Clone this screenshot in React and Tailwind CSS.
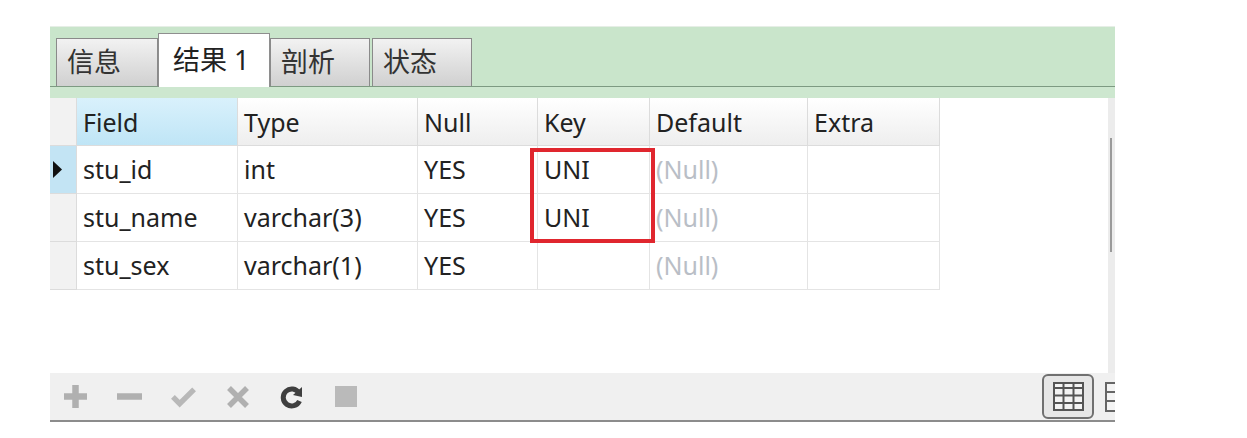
import React from "react";

const cols = [
  { name: "Field", w: "w-[161px]" },
  { name: "Type", w: "w-[180px]" },
  { name: "Null", w: "w-[120px]" },
  { name: "Key", w: "w-[112px]" },
  { name: "Default", w: "w-[158px]" },
  { name: "Extra", w: "w-[132px]" },
];

const rows = [
  ["stu_id", "int", "YES", "UNI", null, ""],
  ["stu_name", "varchar(3)", "YES", "UNI", null, ""],
  ["stu_sex", "varchar(1)", "YES", "", null, ""],
];

const font = { fontFamily: '"Noto Sans", "Noto Sans CJK SC", sans-serif' };

function Tab({ label, active, className }) {
  if (active) {
    return (
      <div
        className={`h-[54px] mb-[-1px] bg-white border border-b-0 border-[#8e8e8e] flex items-center pl-[14px] text-[27px] text-[#222] relative z-10 ${className}`}
      >
        {label}
      </div>
    );
  }
  return (
    <div
      className={`h-[48px] bg-gradient-to-b from-[#f2f2f2] to-[#d0d0d0] border border-b-0 border-[#8a8a8a] flex items-center pl-[10px] text-[27px] text-[#333] ${className}`}
    >
      {label}
    </div>
  );
}

function ToolIcon({ children, className = "" }) {
  return <div className={`flex items-center justify-center ${className}`}>{children}</div>;
}

export default function App() {
  return (
    <div className="w-[1247px] h-[438px] bg-white" style={font}>
      <div className="pt-[26px] pl-[50px]">
        <div className="w-[1065px] flex flex-col">
          {/* tab strip */}
          <div className="h-[61px] bg-[#c9e5cb] border-t border-[#e6eee6] border-b border-b-[#7d9a82] flex items-end pl-[6px]">
            <Tab label="信息" className="w-[102px]" />
            <Tab label="结果 1" active className="w-[112px]" />
            <Tab label="剖析" className="w-[100px]" />
            <div className="w-[2px]" />
            <Tab label="状态" className="w-[100px]" />
          </div>
          <div className="h-[11px] bg-[#cde7cf]" />

          {/* grid area */}
          <div className="h-[275px] bg-white flex relative">
            <div className="flex-1 flex flex-col">
              {/* header */}
              <div className="flex h-[48px]">
                <div className="w-[27px] bg-[#f2f2f2] border-r border-b border-[#dcdcdc]" />
                {cols.map((c, i) => (
                  <div
                    key={c.name}
                    className={`${c.w} h-full flex items-center pl-[6px] pt-[2px] text-[25px] text-[#222] border-r border-b border-[#dcdcdc] ${
                      i === 0
                        ? "bg-gradient-to-b from-[#d9f1fc] to-[#bfe5f6]"
                        : "bg-gradient-to-b from-[#ffffff] to-[#eeeeee]"
                    }`}
                  >
                    {c.name}
                  </div>
                ))}
              </div>
              {rows.map((r, ri) => (
                <div key={ri} className="flex h-[48px]">
                  <div
                    className={`w-[27px] border-r border-b border-[#dcdcdc] flex items-center pl-[3px] ${
                      ri === 0 ? "bg-[#c3e4f4]" : "bg-[#f2f2f2]"
                    }`}
                  >
                    {ri === 0 && (
                      <svg width="9" height="17" viewBox="0 0 9 17">
                        <polygon points="0,0 9,8.5 0,17" fill="#111" />
                      </svg>
                    )}
                  </div>
                  {cols.map((c, ci) => (
                    <div
                      key={c.name}
                      className={`${c.w} h-full flex items-center pl-[6px] text-[25px] border-r border-b border-[#e4e4e4] ${
                        r[ci] === null ? "text-[#b9bec6]" : "text-[#222]"
                      }`}
                    >
                      {r[ci] === null ? "(Null)" : r[ci]}
                    </div>
                  ))}
                </div>
              ))}
            </div>
            {/* scrollbar */}
            <div className="w-[7px] bg-[#ececec] flex flex-col items-center">
              <div className="mt-[40px] h-[114px] w-[3px] border-l-2 border-[#9a9a9a]" />
            </div>
            {/* red highlight */}
            <div className="absolute left-[480px] top-[50px] w-[125px] h-[95px] border-[4px] border-[#e0262e]" />
          </div>

          {/* toolbar */}
          <div className="h-[49px] bg-[#f0f0f0] border-b-2 border-[#8c8c8c] flex items-center overflow-hidden">
            <div className="flex items-center pl-[13px] gap-[29px]">
              <ToolIcon className="w-[25px] h-[25px]">
                <svg width="25" height="25" viewBox="0 0 25 25">
                  <path d="M12.5 1v23M1 12.5h23" stroke="#b0b0b0" strokeWidth="6.5" />
                </svg>
              </ToolIcon>
              <ToolIcon className="w-[25px] h-[25px]">
                <svg width="25" height="25" viewBox="0 0 25 25">
                  <path d="M0 12.5h25" stroke="#b0b0b0" strokeWidth="6.5" />
                </svg>
              </ToolIcon>
              <ToolIcon className="w-[25px] h-[25px]">
                <svg width="26" height="25" viewBox="0 0 26 25">
                  <path d="M2 13l7 7L24 5" stroke="#b8b8b8" strokeWidth="5.5" fill="none" />
                </svg>
              </ToolIcon>
              <ToolIcon className="w-[25px] h-[25px]">
                <svg width="24" height="24" viewBox="0 0 24 24">
                  <path d="M3 3l18 18M21 3L3 21" stroke="#b0b0b0" strokeWidth="5.5" />
                </svg>
              </ToolIcon>
              <ToolIcon className="w-[25px] h-[25px]">
                <svg width="24" height="24" viewBox="0 0 24 24">
                  <path d="M19 8A8.5 8.5 0 1 0 19.5 16" stroke="#3f3f3f" strokeWidth="5" fill="none" />
                  <polygon points="22,2 22,12 13,10" fill="#3f3f3f" />
                </svg>
              </ToolIcon>
              <ToolIcon className="w-[25px] h-[25px]">
                <div className="w-[22px] h-[21px] bg-[#bababa]" />
              </ToolIcon>
            </div>
            <div className="flex-1" />
            <div className="w-[52px] h-[45px] rounded-[6px] border-2 border-[#707070] bg-[#e6e6e6] flex items-center justify-center">
              <svg width="31" height="29" viewBox="0 0 31 29">
                <rect x="1" y="1" width="29" height="27" fill="#f4f4f4" stroke="#555" strokeWidth="2" />
                <path d="M1 6h29M1 13.5h29M1 21h29M10.5 1v27M20.5 1v27" stroke="#555" strokeWidth="2" />
              </svg>
            </div>
            <div className="w-[11px]" />
            <div className="w-[10px] h-[30px] border-2 border-r-0 border-[#666] bg-[#f4f4f4] flex flex-col justify-evenly">
              <div className="h-[2px] bg-[#666]" />
              <div className="h-[2px] bg-[#666]" />
            </div>
          </div>
        </div>
      </div>
    </div>
  );
}
